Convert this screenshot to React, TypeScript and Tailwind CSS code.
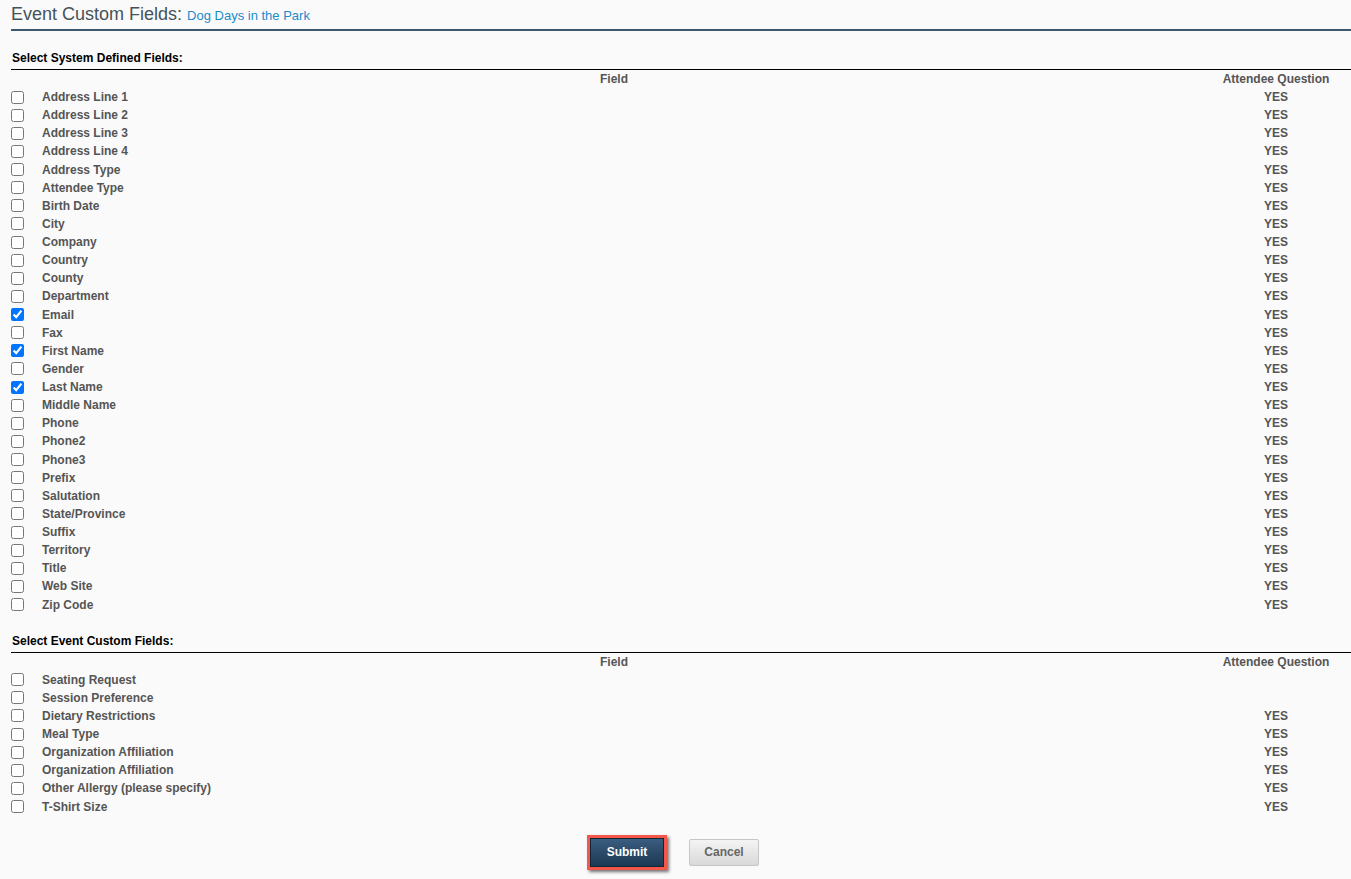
import React from 'react';

type Row = { label: string; yes: boolean; checked?: boolean };

const systemFields: Row[] = [
  { label: 'Address Line 1', yes: true },
  { label: 'Address Line 2', yes: true },
  { label: 'Address Line 3', yes: true },
  { label: 'Address Line 4', yes: true },
  { label: 'Address Type', yes: true },
  { label: 'Attendee Type', yes: true },
  { label: 'Birth Date', yes: true },
  { label: 'City', yes: true },
  { label: 'Company', yes: true },
  { label: 'Country', yes: true },
  { label: 'County', yes: true },
  { label: 'Department', yes: true },
  { label: 'Email', yes: true, checked: true },
  { label: 'Fax', yes: true },
  { label: 'First Name', yes: true, checked: true },
  { label: 'Gender', yes: true },
  { label: 'Last Name', yes: true, checked: true },
  { label: 'Middle Name', yes: true },
  { label: 'Phone', yes: true },
  { label: 'Phone2', yes: true },
  { label: 'Phone3', yes: true },
  { label: 'Prefix', yes: true },
  { label: 'Salutation', yes: true },
  { label: 'State/Province', yes: true },
  { label: 'Suffix', yes: true },
  { label: 'Territory', yes: true },
  { label: 'Title', yes: true },
  { label: 'Web Site', yes: true },
  { label: 'Zip Code', yes: true },
];

const customFields: Row[] = [
  { label: 'Seating Request', yes: false },
  { label: 'Session Preference', yes: false },
  { label: 'Dietary Restrictions', yes: true },
  { label: 'Meal Type', yes: true },
  { label: 'Organization Affiliation', yes: true },
  { label: 'Organization Affiliation', yes: true },
  { label: 'Other Allergy (please specify)', yes: true },
  { label: 'T-Shirt Size', yes: true },
];

const FieldTable: React.FC<{ title: string; rows: Row[] }> = ({ title, rows }) => (
  <section>
    <div className="border-b border-black pl-px pb-[3px] text-[12px] leading-[16px] font-bold text-black">
      {title}
    </div>
    <div className="grid grid-cols-[16px_1fr_150px] text-[12px] font-bold text-[#555]">
      <div className="h-[18px]" />
      <div className="h-[18px] leading-[18px] text-center">Field</div>
      <div className="h-[18px] leading-[18px] text-center">Attendee Question</div>
      {rows.map((r, i) => (
        <React.Fragment key={i}>
          <div className="h-[18.14px] flex items-center">
            <input
              type="checkbox"
              defaultChecked={r.checked}
              className="m-0 w-[13px] h-[13px] accent-[#0075ff]"
            />
          </div>
          <div className="h-[18.14px] leading-[18.14px] pl-[15px]">{r.label}</div>
          <div className="h-[18.14px] leading-[18.14px] text-center">{r.yes ? 'YES' : ''}</div>
        </React.Fragment>
      ))}
    </div>
  </section>
);

const App: React.FC = () => {
  return (
    <div className="min-h-screen bg-[#fafafa] pl-[11px] font-['Liberation_Sans',Arial,sans-serif]">
      {/* Page title */}
      <div className="border-b-2 border-[#3d5a6c] pt-[3px] pb-[2px] leading-[22px]">
        <span className="text-[18px] text-[#44525c]">Event Custom Fields: </span>
        <span className="text-[13px] text-[#1b8bcc]">Dog Days in the Park</span>
      </div>

      <div className="mt-[19px]">
        <FieldTable title="Select System Defined Fields:" rows={systemFields} />
      </div>

      <div className="mt-[19px]">
        <FieldTable title="Select Event Custom Fields:" rows={customFields} />
      </div>

      {/* Actions */}
      <div className="mt-[19px] flex justify-center items-center gap-[22px] pr-[16px]">
        <div className="border-[3px] border-[#f2574a] shadow-[2px_2px_3px_rgba(0,0,0,0.55)]">
          <button className="w-[74px] h-[29px] bg-gradient-to-b from-[#3a5d80] to-[#1d3853] border border-[#10263b] text-white text-[12px] font-bold">
            Submit
          </button>
        </div>
        <button className="w-[70px] h-[27px] bg-gradient-to-b from-[#f4f4f4] to-[#d9d9d9] border border-[#c6c6c6] rounded-[2px] text-[#666] text-[12px] font-bold">
          Cancel
        </button>
      </div>
    </div>
  );
};

export default App;
